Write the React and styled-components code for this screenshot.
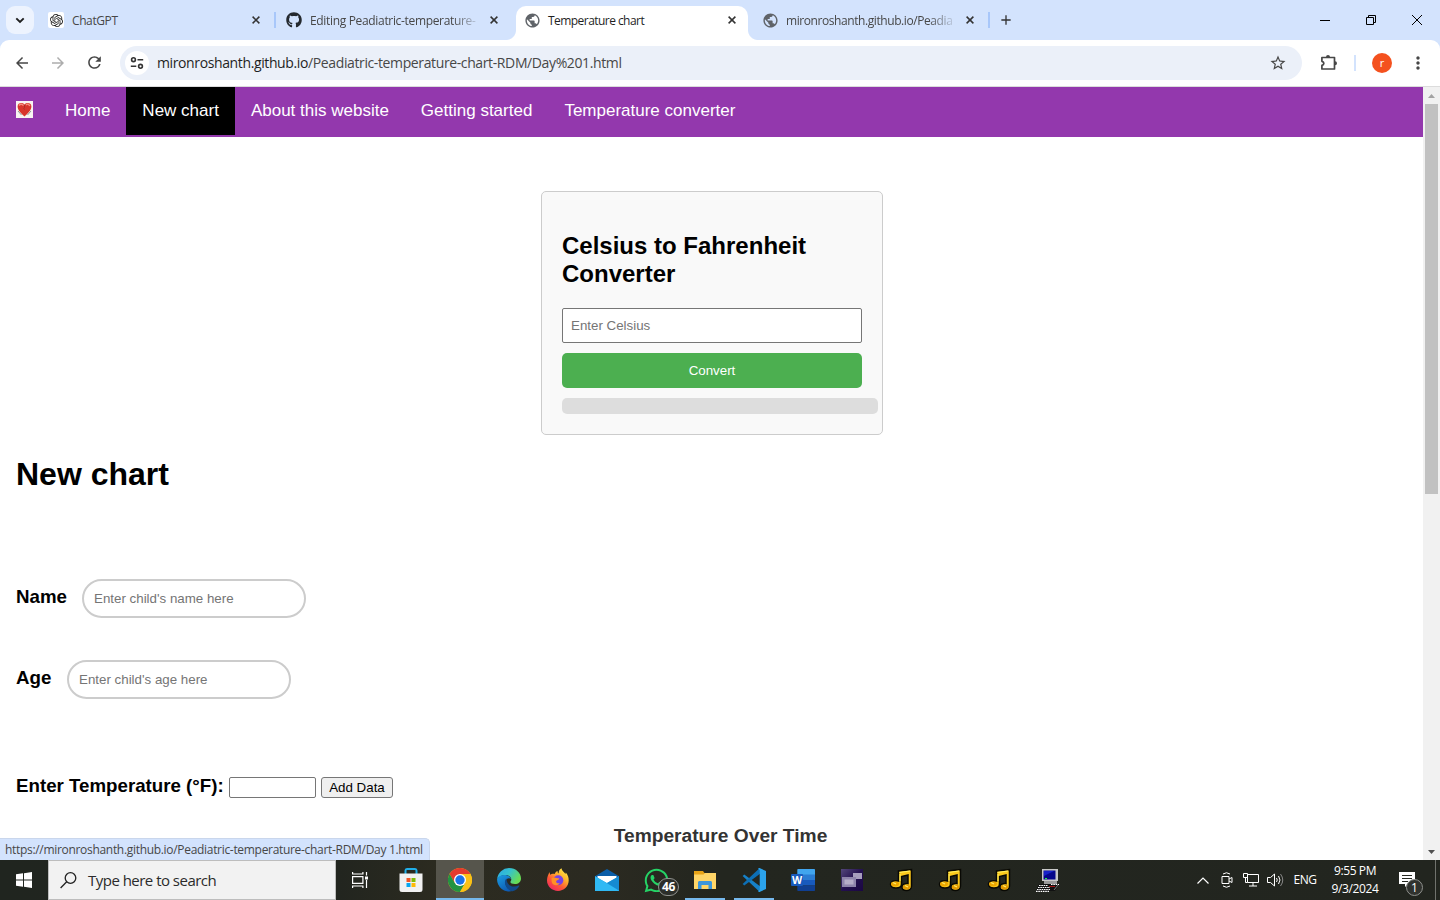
import React from "react";
import styled, { createGlobalStyle } from "styled-components";
import { SiOpenai } from "react-icons/si";
import { FaGithub, FaWhatsapp } from "react-icons/fa";
import { MdPublic, MdAdd, MdArrowBack, MdArrowForward, MdRefresh, MdStarBorder, MdMoreVert } from "react-icons/md";

const GlobalStyle = createGlobalStyle`
  * { box-sizing: border-box; }
  html, body { margin: 0; padding: 0; background: #fff; overflow: hidden; }
  svg { display: block; flex: none; }
`;

const arial = '"Liberation Sans", Arial, sans-serif';
const segoe = '"Open Sans", "Segoe UI", sans-serif';

const Screen = styled.div`
  width: 1440px;
  height: 900px;
  display: flex;
  flex-direction: column;
  font-family: ${arial};
  color: #000;
  overflow: hidden;
`;

/* Browser window */
const TabStrip = styled.div`
  height: 40px;
  flex: none;
  display: flex;
  align-items: flex-start;
  background: #d3e3fd;
`;
const TabSearch = styled.div`
  width: 28px;
  height: 28px;
  margin: 6px 6px 0;
  border-radius: 9px;
  background: #edf3fe;
  display: grid;
  place-items: center;
`;
const Tab = styled.div`
  position: relative;
  width: 232px;
  height: 34px;
  margin-top: 6px;
  padding: 0 8px 6px;
  display: flex;
  align-items: center;
  background: ${(p) => (p.$active ? "#fff" : "transparent")};
  border-radius: 10px 10px 0 0;
  color: ${(p) => (p.$active ? "#1f1f1f" : "#474747")};
  ${(p) =>
    p.$active &&
    `&::before, &::after {
      content: "";
      position: absolute;
      bottom: 0;
      width: 10px;
      height: 10px;
    }
    &::before { left: -10px; background: radial-gradient(circle at 0 0, transparent 9.5px, #fff 10.5px); }
    &::after { right: -10px; background: radial-gradient(circle at 100% 0, transparent 9.5px, #fff 10.5px); }`}
`;
const Favicon = styled.div`
  width: 16px;
  height: 16px;
  flex: none;
  display: grid;
  place-items: center;
  border-radius: 2px;
  background: ${(p) => p.$bg || "transparent"};
`;
const TabTitle = styled.div`
  flex: none;
  width: 168px;
  margin-left: 8px;
  padding-top: 1px;
  white-space: nowrap;
  font: 12px/18px ${segoe};
  letter-spacing: ${(p) => p.$ls || 0}px;
  ${(p) => p.$fade && "mask-image: linear-gradient(90deg, #000 142px, transparent 172px);"}
`;
const TabClose = styled.div`
  width: 16px;
  height: 16px;
  margin-left: 8px;
  display: grid;
  place-items: center;
`;
const TabGap = styled.div`
  width: 6px;
  height: 16px;
  margin-top: 12px;
  display: flex;
  justify-content: center;
  &::before {
    content: "";
    width: 2px;
    background: ${(p) => (p.$line ? "#a8c7fa" : "transparent")};
  }
`;
const NewTab = styled.div`
  margin: 12px 0 0 6px;
`;
const WindowButtons = styled.div`
  margin-left: auto;
  height: 40px;
  display: flex;
`;
const WindowButton = styled.div`
  width: 46px;
  display: grid;
  place-items: center;
`;
const ToolbarBack = styled.div`
  flex: none;
  background: #d3e3fd;
`;
const Toolbar = styled.div`
  height: 47px;
  display: flex;
  align-items: center;
  padding: 0 12px 1px 12px;
  border-radius: 9px 9px 0 0;
  border-bottom: 1px solid #dcdcdc;
  background: #fff;
`;
const ToolButton = styled.div`
  width: 20px;
  height: 20px;
  flex: none;
  margin-right: 16px;
  display: grid;
  place-items: center;
`;
const AddressBar = styled.div`
  width: 1182px;
  height: 34px;
  flex: none;
  display: flex;
  align-items: center;
  margin-right: 16px;
  padding: 0 15px 0 5px;
  border-radius: 17px;
  background: #ebf0f9;
`;
const SiteInfo = styled.div`
  width: 24px;
  height: 24px;
  border-radius: 50%;
  background: #fff;
  display: grid;
  place-items: center;
`;
const Url = styled.div`
  flex: 1;
  margin-left: 8px;
  font: 14px/20px ${segoe};
  letter-spacing: ${(p) => p.$ls}px;
  color: #474747;
  white-space: nowrap;
  span { color: #1f1f1f; }
`;
const ToolDivider = styled.div`
  width: 2px;
  height: 16px;
  margin-right: 16px;
  background: #d3e3fd;
`;
const Avatar = styled.div`
  width: 20px;
  height: 20px;
  margin-right: 16px;
  border-radius: 50%;
  background: #f4511e;
  color: #fff;
  font: 11px/19px ${segoe};
  text-align: center;
`;

/* Web page */
const Viewport = styled.div`
  position: relative;
  flex: 1;
  min-height: 0;
  display: flex;
`;
const Page = styled.div`
  width: 1423px;
  overflow: hidden;
`;
const Nav = styled.nav`
  height: 50px;
  display: flex;
  align-items: flex-start;
  background: #9338ad;
`;
const NavItem = styled.div`
  height: 48px;
  padding: 14px 16px;
  font-size: 17px;
  line-height: 19px;
  color: #fff;
  white-space: nowrap;
  background: ${(p) => (p.$active ? "#000" : "transparent")};
`;
const Card = styled.section`
  width: 342px;
  margin: 54px auto 0 541px;
  padding: 20px;
  border: 1px solid #ccc;
  border-radius: 5px;
  background: #f9f9f9;
`;
const CardTitle = styled.h2`
  margin: 20px 0;
  font-size: 24px;
  line-height: 28px;
`;
const CelsiusInput = styled.input`
  display: block;
  width: 300px;
  height: 35px;
  padding: 8px;
  border: 1px solid #767676;
  border-radius: 2px;
  font: 13.333px ${arial};
  &::placeholder { color: #757575; }
`;
const ConvertButton = styled.button`
  display: block;
  width: 300px;
  height: 35px;
  margin: 10px 0;
  border: 0;
  border-radius: 5px;
  background: #4caf50;
  color: #fff;
  font: 13.333px ${arial};
`;
const Result = styled.div`
  width: 316px;
  height: 16px;
  border-radius: 5px;
  background: #ddd;
`;
const Main = styled.main`
  padding: 0 16px;
`;
const PageTitle = styled.h1`
  margin: 21px 0 87px;
  font-size: 32px;
  line-height: 36px;
`;
const Field = styled.div`
  height: 39px;
  margin-bottom: ${(p) => p.$after}px;
  display: flex;
  align-items: flex-start;
`;
const Label = styled.label`
  margin-top: ${(p) => p.$top}px;
  font-size: 18.72px;
  line-height: 21px;
  font-weight: bold;
  width: ${(p) => p.$w}px;
  white-space: nowrap;
  flex: none;
`;
const RoundInput = styled.input`
  width: 224px;
  height: 39px;
  padding: 10px;
  border: 2px solid #ccc;
  border-radius: 20px;
  font: 13.333px ${arial};
  &::placeholder { color: #757575; }
`;
const TempInput = styled.input`
  width: 87px;
  height: 21px;
  border: 1px solid #767676;
  border-radius: 2px;
`;
const AddButton = styled.button`
  width: 72px;
  height: 21px;
  margin-left: 5px;
  padding: 0;
  border: 1px solid #767676;
  border-radius: 3px;
  background: #efefef;
  font: 13.333px ${arial};
`;
const ChartTitle = styled.div`
  margin-top: 8px;
  text-align: center;
  padding-left: 18px;
  font-size: 19.2px;
  line-height: 24px;
  font-weight: bold;
  color: #333;
`;
const Scrollbar = styled.div`
  width: 17px;
  background: #f1f1f1;
  display: flex;
  flex-direction: column;
  align-items: center;
`;
const ScrollArrow = styled.div`
  height: 17px;
  display: grid;
  place-items: center;
`;
const ScrollThumb = styled.div`
  width: 13px;
  height: 390px;
  margin-bottom: auto;
  background: #c1c1c1;
`;
const StatusBubble = styled.div`
  position: absolute;
  left: 0;
  bottom: 0;
  width: 430px;
  height: 22px;
  padding-left: 5px;
  border: solid #c9d6ec;
  border-width: 1px 1px 0 0;
  border-radius: 0 5px 0 0;
  background: #d3e3fd;
  font: 12px/22px ${segoe};
  letter-spacing: ${(p) => p.$ls}px;
  color: #474747;
  white-space: nowrap;
`;

/* Taskbar */
const Taskbar = styled.div`
  height: 40px;
  flex: none;
  display: flex;
  color: #fff;
  background: linear-gradient(90deg, #20251f 0, #22251f 340px, #2c2b20 440px, #2b2a21 600px, #23261f 720px, #22251f 100%);
`;
const TaskButton = styled.div`
  position: relative;
  width: 48px;
  height: 40px;
  flex: none;
  margin-right: ${(p) => p.$gap || 0}px;
  display: grid;
  place-items: center;
  background: ${(p) => (p.$active ? "#56554c" : "transparent")};
  box-shadow: ${(p) => (p.$active ? "inset 0 -2px #76b9ed" : "none")};
`;
const RunningLine = styled.div`
  position: absolute;
  left: 4px;
  bottom: 0;
  width: 40px;
  height: 2px;
  background: #76b9ed;
`;
const SearchBox = styled.div`
  width: 288px;
  display: flex;
  align-items: center;
  padding-left: 11px;
  gap: 11px;
  background: #f2f2f2;
  border: 1px solid #bdbdbd;
  color: #2b2b2b;
  font: 15px/20px ${segoe};
  letter-spacing: ${(p) => p.$ls}px;
`;
const CountBadge = styled.div`
  position: absolute;
  left: 26px;
  top: 18px;
  width: 21px;
  height: 18px;
  border: 1px solid #8f918d;
  border-radius: 9px;
  background: #2c2e2a;
  font: bold 12px/16px ${segoe};
  letter-spacing: -0.4px;
  text-align: center;
`;
const Tray = styled.div`
  margin-left: auto;
  display: flex;
  align-items: center;
`;
const TrayIcon = styled.div`
  width: 24px;
  display: grid;
  place-items: center;
`;
const Language = styled.div`
  width: 36px;
  text-align: center;
  font: 12px/16px ${segoe};
  letter-spacing: -0.4px;
`;
const Clock = styled.div`
  width: 64px;
  margin-right: 7px;
  text-align: center;
  font: 12px/18px ${segoe};
  letter-spacing: ${(p) => p.$ls}px;
`;
const Notifications = styled.div`
  position: relative;
  width: 41px;
  height: 40px;
  padding: 12px 0 0 5px;
`;
const NotifyCount = styled.div`
  position: absolute;
  left: 12px;
  top: 19px;
  width: 17px;
  height: 17px;
  border: 1px solid #8f918d;
  border-radius: 50%;
  background: #30322e;
  font: 12px/15px ${segoe};
  text-align: center;
`;
const DesktopEdge = styled.div`
  width: 5px;
  height: 40px;
  border-left: 1px solid #70726d;
`;

const HeartIcon = () => (
  <svg width="17" height="17" viewBox="0 0 17 17">
    <path d="M0 0h17v17H0z" fill="#f8f4f1" />
    <path d="M8.500 15.500C6 12.800 1.400 9.500 1.600 5.200 1.800 1.800 6 .9 8.500 3.400 11 .9 15.200 1.800 15.400 5.200 15.600 9.500 11 12.800 8.500 15.500z" fill="#d8352c" />
    <path d="M3 4.500Q5 2 7.500 4.500M10 4q2-2 4 1" stroke="#f58e7e" strokeWidth="1.300" fill="none" />
    <path d="M8.500 4v2.500l-.8 1 1.200 1" stroke="#8f2a22" fill="none" strokeWidth=".6" />
    <path d="M2 10l3.500 4M15 10l-3.500 4" stroke="#8c9a92" fill="none" />
  </svg>
);
const CloseIcon = () => (
  <svg width="8" height="8" viewBox="0 0 8 8"><path d="M.6.6l6.800 6.800M7.400.6L.6 7.400" stroke="#333" strokeWidth="1.500" /></svg>
);
const SiteIcon = () => (
  <svg width="14" height="14" viewBox="0 0 14 14" fill="none" stroke="#333" strokeWidth="1.600">
    <circle cx="3.500" cy="3.700" r="1.900" /><path d="M7.500 3.700h5.700M.8 10.300h5.500" /><circle cx="10.500" cy="10.300" r="1.900" />
  </svg>
);
const ExtensionIcon = () => (
  <svg width="20" height="20" viewBox="0 0 20 20">
    <path d="M3.900 4.500h12.600V16H3.900v-3.600c2.600-.5 2.600-3.600 0-4.100z" fill="none" stroke="#474747" strokeWidth="1.700" strokeLinejoin="round" />
    <path d="M8 4a2 2 0 0 1 4 0zM17 8.300a2 2 0 0 1 0 4z" fill="#474747" />
  </svg>
);
const ChromeIcon = () => (
  <svg width="24" height="24" viewBox="0 0 24 24">
    <circle cx="12" cy="12" r="12" fill="#fbc116" />
    <path d="M12 6h10.400A12 12 0 0 0 1.600 6L6.800 15z" fill="#e33b2e" />
    <path d="M1.600 6A12 12 0 0 0 12 24l5.200-9L12 12 6.800 15z" fill="#229342" />
    <path d="M12 24A12 12 0 0 0 22.400 6H12l5.200 9z" fill="#fbc116" />
    <circle cx="12" cy="12" r="6" fill="#fff" /><circle cx="12" cy="12" r="4.700" fill="#1a73e8" />
  </svg>
);
const EdgeIcon = () => (
  <svg width="24" height="24" viewBox="0 0 24 24">
    <defs>
      <linearGradient id="edgeTop" x1="0" y1="0" x2="1" y2=".5"><stop stopColor="#2aa8e6" /><stop offset=".5" stopColor="#35c1cf" /><stop offset="1" stopColor="#67dc56" /></linearGradient>
      <linearGradient id="edgeSide" x1="0" y1="0" x2=".6" y2="1"><stop stopColor="#1b9de2" /><stop offset="1" stopColor="#0d5bb4" /></linearGradient>
    </defs>
    <path d="M.2 11A12 12 0 0 1 12 0c7 0 12 5 12 10.400 0 3.400-2.600 5.600-6 5.600-3 0-4.600-1-4.600-2 0-.7.900-1 .9-2.700C14.300 9 12 7 8.500 7 4.500 7 1.600 8.800.2 11z" fill="url(#edgeTop)" />
    <path d="M.1 11C1.500 7.500 5 6.700 8.400 7c3.100.3 5.300 2 5.800 4.200C13 9.600 9 9.700 8.500 14c-.4 4 2.800 8 7 9A12 12 0 0 1 .1 11z" fill="url(#edgeSide)" />
    <path d="M9.500 10.600C6 14 8.500 21.700 15.700 23.300c2.700-.9 5-2.600 6.500-5.100.3-.5-.1-.8-.6-.6-6.700 2.700-12-.3-12.100-7z" fill="#114a8b" />
  </svg>
);
const FirefoxIcon = () => (
  <svg width="24" height="24" viewBox="0 0 24 24">
    <defs>
      <linearGradient id="foxBody" x1=".9" y1="0" x2=".2" y2="1"><stop stopColor="#fff04e" /><stop offset=".35" stopColor="#ffb52b" /><stop offset=".65" stopColor="#ff5a35" /><stop offset="1" stopColor="#ed2366" /></linearGradient>
    </defs>
    <path d="M3.600 4c.1 1.400.3 2 .8 2.700C5.300 5.700 7 5.500 8.600 6 9.300 4 11 3.300 11.600 3c-.2 1 .3 2 1 2.600C12.700 3 13.400 1.300 15.500.3c.3 2.600 2.400 3.500 4 5.600l.3-1.300c2 2.300 3 5 2.900 8C22.500 18.600 17.800 23 12 23S1 18.500 1 12.600C1 9 2.400 6 3.600 4z" fill="url(#foxBody)" />
    <circle cx="12.300" cy="12.300" r="5" fill="#7542e5" />
    <path d="M5.500 10.300c2-1.600 3.800-.7 5.200-.2 1.500.3 2.100 0 2.600.3-.4 1.700-2.600 1.600-3.200 2.800 0 1.800 1.700 2.600 3.600 1.800-1.600 3.300-6.800 3-8-1z" fill="#ff9125" />
  </svg>
);
const MailIcon = () => (
  <svg width="24" height="22" viewBox="0 0 24 22">
    <path d="M0 7.200L12 0l12 7.200V14H0z" fill="#0b5ea8" /><path d="M2.500 7h19v7l-9.500 3-9.500-3z" fill="#fff" />
    <path d="M0 7.200L12 14l12-6.800V22H0z" fill="#24a6e6" /><path d="M0 7.200L24 21.500V22H0z" fill="#30b9f4" /><path d="M12 14L24 7.200v14.300z" fill="#168bd2" />
  </svg>
);
const StoreIcon = () => (
  <svg width="24" height="25" viewBox="0 0 24 25">
    <path d="M6.500 6V2.500c0-.8.600-1.500 1.400-1.500h8.200c.8 0 1.400.7 1.400 1.500V6" fill="none" stroke="#20aee8" strokeWidth="2" />
    <path d="M.5 5.500h23v16a2.500 2.500 0 0 1-2.500 2.500H3a2.500 2.500 0 0 1-2.500-2.500z" fill="#f1f1f1" />
    <path d="M7.500 10h4v4h-4z" fill="#f35325" /><path d="M12.500 10h4v4h-4z" fill="#81bc06" /><path d="M7.500 15h4v4h-4z" fill="#05a6f0" /><path d="M12.500 15h4v4h-4z" fill="#ffba08" />
  </svg>
);
const FolderIcon = () => (
  <svg width="22" height="18" viewBox="0 0 22 18">
    <path d="M0 0h9l1.500 2H22v5H0z" fill="#e8a317" /><path d="M0 3.500h9.500L11 2h11v16H0z" fill="#ffd567" />
    <path d="M4 18v-6.500c0-.8.700-1.500 1.500-1.500h11c.8 0 1.500.7 1.500 1.500V18h-3.500v-4h-7v4z" fill="#3c96dc" />
  </svg>
);
const CodeIcon = () => (
  <svg width="24" height="24" viewBox="0 0 24 24">
    <path d="M.6 7.900l1.700-1.500L18 18.300V24L16.700 23z" fill="#1681c8" /><path d="M.6 16.100l1.700 1.500L18 5.700V0L16.700 1z" fill="#0d6fb5" />
    <path d="M17.500.1L24 3v18l-6.500 2.900c-.8.200-1.300-.2-1.300-.9l1.500-1V2L16.200 1c0-.7.600-1.100 1.300-.9z" fill="#2ba3ec" />
  </svg>
);
const WordIcon = () => (
  <svg width="24" height="22" viewBox="0 0 24 22">
    <path d="M7 0h16.300c.4 0 .7.300.7.700V6H6.300V.7c0-.4.300-.7.700-.7z" fill="#41a5ee" /><path d="M6.300 5.500H24V11H6.300z" fill="#2b7cd3" />
    <path d="M6.300 11H24v5.500H6.300z" fill="#185abd" /><path d="M6.300 16.500H24v4.800c0 .4-.3.700-.7.700H7c-.4 0-.7-.3-.7-.7z" fill="#103f91" />
    <rect y="5" width="12" height="12" rx="1" fill="#185abd" />
    <text x="6" y="14.700" textAnchor="middle" fontFamily="Open Sans, sans-serif" fontSize="10.500" fontWeight="bold" fill="#fff">W</text>
  </svg>
);
const WindowsAppIcon = () => (
  <svg width="22" height="22" viewBox="0 0 22 22">
    <defs><linearGradient id="purpleApp" x1="0" y1="0" x2="1" y2="1"><stop stopColor="#54477a" /><stop offset=".5" stopColor="#24104f" /><stop offset="1" stopColor="#1b0744" /></linearGradient></defs>
    <path d="M0 0h22v22H0z" fill="url(#purpleApp)" />
    <path d="M12 4h9v6h-9z" fill="#a79dbd" /><path d="M1 8h14v10H1z" fill="#8f84ab" /><path d="M3.500 10.500h9v5h-9z" fill="#b6adc8" />
  </svg>
);
const MusicIcon = () => (
  <svg width="24" height="24" viewBox="0 0 24 24">
    <path d="M9.500 3L22.500 1.500V18c0 3-2.500 4.500-5 4.500-3 0-4.500-1.500-4.500-3.500 0-2.500 3-4 6-3.500V7l-6.500 1.500V16c0 3-2.500 4-5.500 4s-5.500-1.500-5.500-4 3.500-4 8-3z" fill="#fcc91b" stroke="#090904" strokeWidth="1.500" />
    <path d="M10.500 4.500L21 3M11 6v7" stroke="#fff263" /><ellipse cx="6" cy="16" rx="4" ry="2.400" fill="#eea800" /><ellipse cx="17.500" cy="19" rx="3.700" ry="2.300" fill="#e59a00" />
    <path d="M4 14.500l3 1.500M16 17.500l3 1.500" stroke="#ffec65" strokeWidth="1.300" />
  </svg>
);
const ComputerIcon = () => (
  <svg width="24" height="24" viewBox="0 0 24 24">
    <path d="M6 1h16v12H6z" fill="#c8c8c8" /><path d="M7.500 2.500h12v9h-12z" fill="#06068a" /><path d="M8 3h10L8 8z" fill="#1721c9" /><path d="M8 13h13v3H8z" fill="#9a9a9a" />
    <path d="M9 10.500h2" stroke="#1aff40" /><path d="M3 16h20l-4 7H0z" fill="#111" /><path d="M13 18.500h6" stroke="#a01515" />
    <path d="M3 17.500h9M2 19.500h12M1 21.500h13M0 23.300h13M15 16.500h8" stroke="#fff" strokeWidth="1.200" strokeDasharray="1.600 .7" />
    <path d="M18 22l4-5" stroke="#777" />
  </svg>
);
const StartIcon = () => (
  <svg width="16" height="16" viewBox="0 0 16 16" fill="#fff"><path d="M0 2.300L7 1.300V7.500H0zM8 1.200L16 0v7.500H8zM0 8.500h7v6.200l-7-1zM8 8.500h8V16l-8-1.200z" /></svg>
);
const SearchIcon = () => (
  <svg width="17" height="17" viewBox="0 0 17 17" fill="none" stroke="#222" strokeWidth="1.300"><circle cx="10.500" cy="6" r="5.300" /><path d="M6.700 9.800L.6 16" /></svg>
);
const TaskViewIcon = () => (
  <svg width="17" height="16" viewBox="0 0 17 16" fill="none" stroke="#fff" strokeWidth="1.200"><path d="M.6 4.600h10.300v6.800H.6zM.6 0v2h10.300V0M.6 16v-2h10.300v2M14.500 0v3.500M14.500 8v8" /><path d="M13 4.500h3v3h-3z" fill="#fff" stroke="none" /></svg>
);

const tabs = [
  { title: "ChatGPT", bg: "#fff", icon: <SiOpenai size={13} color="#222" />, line: true, ls: -0.4 },
  { title: "Editing Peadiatric-temperature-", icon: <FaGithub size={16} color="#24292f" />, fade: true, ls: -0.33 },
  { title: "Temperature chart", icon: <MdPublic size={17} color="#5f6368" />, active: true, ls: -0.55 },
  { title: "mironroshanth.github.io/Peadia", icon: <MdPublic size={17} color="#5f6368" />, fade: true, line: true, ls: -0.42 },
];
const apps = [
  { icon: <StoreIcon /> }, { icon: <ChromeIcon />, active: true }, { icon: <EdgeIcon /> }, { icon: <FirefoxIcon /> }, { icon: <MailIcon /> },
  { icon: <FaWhatsapp size={27} color="#25d366" />, badge: "46" }, { icon: <FolderIcon />, running: true }, { icon: <CodeIcon />, running: true },
  { icon: <WordIcon /> }, { icon: <WindowsAppIcon /> }, { icon: <MusicIcon /> }, { icon: <MusicIcon /> }, { icon: <MusicIcon /> }, { icon: <ComputerIcon /> },
];

export default function App() {
  return (
    <Screen>
      <GlobalStyle />
      <TabStrip>
        <TabSearch><svg width="10" height="7" viewBox="0 0 10 7"><path d="M1.300 1.300L5 5l3.700-3.700" fill="none" stroke="#1f1f1f" strokeWidth="1.900" /></svg></TabSearch>
        {tabs.map((t) => (
          <React.Fragment key={t.title}>
            <Tab $active={t.active}>
              <Favicon $bg={t.bg}>{t.icon}</Favicon>
              <TabTitle $fade={t.fade} $ls={t.ls}>{t.title}</TabTitle>
              <TabClose><CloseIcon /></TabClose>
            </Tab>
            <TabGap $line={t.line} />
          </React.Fragment>
        ))}
        <NewTab><MdAdd size={16} color="#333" /></NewTab>
        <WindowButtons>
          <WindowButton><svg width="10" height="10"><path d="M0 5.500h10" stroke="#000" /></svg></WindowButton>
          <WindowButton><svg width="10" height="10" fill="none" stroke="#000"><path d="M.5 2.500h7v7h-7zM2.500 2.500v-2h7v7h-2" /></svg></WindowButton>
          <WindowButton><svg width="10" height="10"><path d="M0 0l10 10M10 0L0 10" stroke="#000" /></svg></WindowButton>
        </WindowButtons>
      </TabStrip>
      <ToolbarBack>
        <Toolbar>
          <ToolButton><MdArrowBack size={18} color="#474747" /></ToolButton>
          <ToolButton><MdArrowForward size={18} color="#adadad" /></ToolButton>
          <ToolButton><MdRefresh size={19} color="#474747" /></ToolButton>
          <AddressBar>
            <SiteInfo><SiteIcon /></SiteInfo>
            <Url $ls={-0.38}><span>mironroshanth.github.io</span>/Peadiatric-temperature-chart-RDM/Day%201.html</Url>
            <MdStarBorder size={18} color="#474747" />
          </AddressBar>
          <ToolButton><ExtensionIcon /></ToolButton>
          <ToolDivider />
          <Avatar>r</Avatar>
          <MdMoreVert size={20} color="#474747" />
        </Toolbar>
      </ToolbarBack>
      <Viewport>
        <Page>
          <Nav>
            <NavItem><HeartIcon /></NavItem>
            <NavItem>Home</NavItem>
            <NavItem $active>New chart</NavItem>
            <NavItem>About this website</NavItem>
            <NavItem>Getting started</NavItem>
            <NavItem>Temperature converter</NavItem>
          </Nav>
          <Card>
            <CardTitle>Celsius to Fahrenheit Converter</CardTitle>
            <CelsiusInput placeholder="Enter Celsius" />
            <ConvertButton>Convert</ConvertButton>
            <Result />
          </Card>
          <Main>
            <PageTitle>New chart</PageTitle>
            <Field $after={42}><Label $top={7} $w={66}>Name</Label><RoundInput placeholder="Enter child's name here" /></Field>
            <Field $after={78}><Label $top={7} $w={51}>Age</Label><RoundInput placeholder="Enter child's age here" /></Field>
            <Field $after={0}><Label $top={-2} $w={213}>Enter Temperature (°F):</Label><TempInput /><AddButton>Add Data</AddButton></Field>
            <ChartTitle>Temperature Over Time</ChartTitle>
          </Main>
        </Page>
        <Scrollbar>
          <ScrollArrow><svg width="7" height="4"><path d="M0 4L3.500 0 7 4z" fill="#a3a3a3" /></svg></ScrollArrow>
          <ScrollThumb />
          <ScrollArrow><svg width="7" height="4"><path d="M0 0h7L3.500 4z" fill="#505050" /></svg></ScrollArrow>
        </Scrollbar>
        <StatusBubble $ls={-0.31}>https://mironroshanth.github.io/Peadiatric-temperature-chart-RDM/Day 1.html</StatusBubble>
      </Viewport>
      <Taskbar>
        <TaskButton><StartIcon /></TaskButton>
        <SearchBox $ls={-0.52}><SearchIcon />Type here to search</SearchBox>
        <TaskButton $gap={3}><TaskViewIcon /></TaskButton>
        {apps.map((a, i) => (
          <TaskButton key={i} $gap={1} $active={a.active}>
            {a.icon}
            {a.badge && <CountBadge>{a.badge}</CountBadge>}
            {a.running && <RunningLine />}
          </TaskButton>
        ))}
        <Tray>
          <TrayIcon><svg width="12" height="7"><path d="M.5 6.500L6 1l5.500 5.500" fill="none" stroke="#fff" strokeWidth="1.200" /></svg></TrayIcon>
          <TrayIcon><svg width="12" height="16" fill="none" stroke="#fff"><path d="M1 4.500h7v7H1zM8 7l3-1.500v5L8 9M2 2Q5.500-.5 9 2M2 14q3.500 2.500 7 0" /></svg></TrayIcon>
          <TrayIcon><svg width="17" height="14" fill="none" stroke="#fff"><path d="M4.500 1.500h11v8h-11zM10 9.500V13M6 13h8M.5.500h4v4h-4zM2.500 4.500v5h2" /></svg></TrayIcon>
          <TrayIcon><svg width="17" height="14" fill="none" stroke="#fff"><path d="M.5 4.500h3l4-3.500v12l-4-3.500h-3z" /><path d="M9.500 5q1.500 2 0 4M11.500 3q3 4 0 8" /><path d="M13.500 1q4.500 6 0 12" stroke="#888" /></svg></TrayIcon>
          <Language>ENG</Language>
          <Clock $ls={-0.4}>9:55 PM<br />9/3/2024</Clock>
          <Notifications>
            <svg width="16" height="15"><path d="M0 0h16v12H9l-3 3v-3H0z" fill="#fff" /><path d="M3 3.500h10M3 6.500h10M3 9.500h6" stroke="#262922" /></svg>
            <NotifyCount>1</NotifyCount>
          </Notifications>
          <DesktopEdge />
        </Tray>
      </Taskbar>
    </Screen>
  );
}
